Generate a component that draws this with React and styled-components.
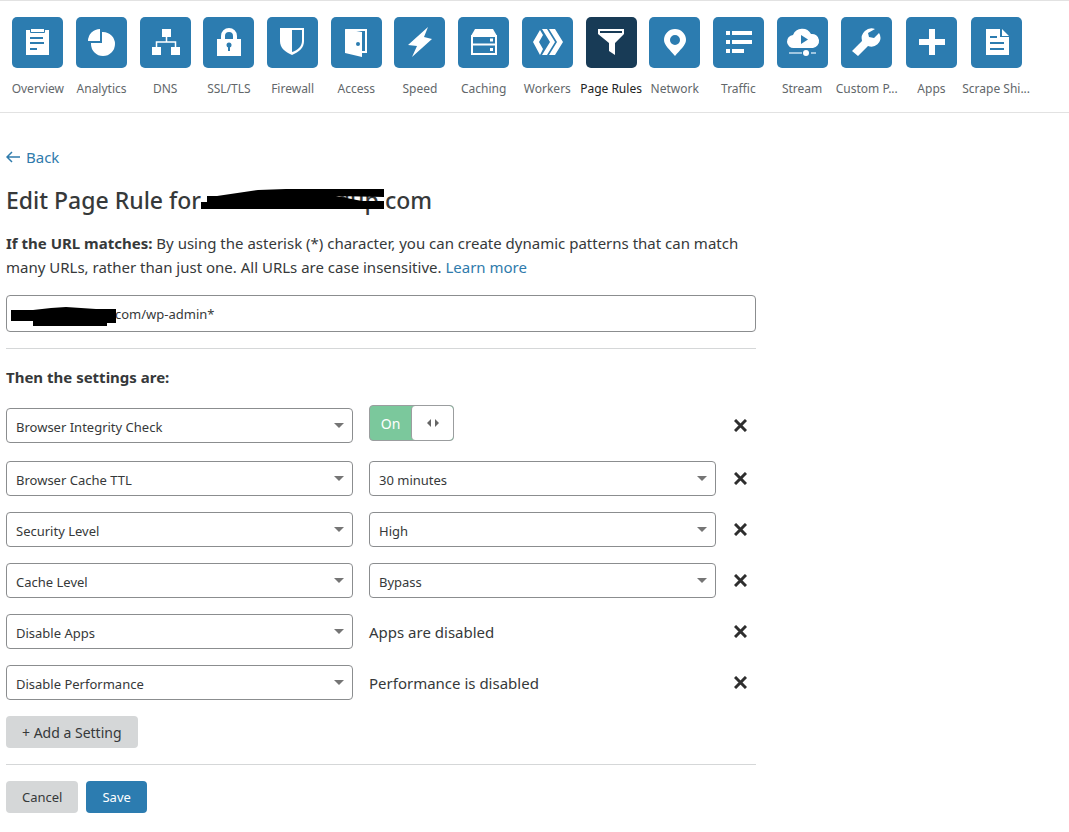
import React, { useState } from "react";
import styled, { createGlobalStyle } from "styled-components";

const blue = "#2c7cb0";
const navy = "#183b56";

const tabs = [
  {
    name: "Overview",
    icon: (
      <>
        <path fill="#fff" d="M14 13h4v-1h14v1h5v25H14z" />
        <path stroke={blue} strokeWidth="1" d="M18.500 12v3.500h14V12" />
        <path stroke={blue} strokeWidth="2" d="M18 21h13M18 26h14M18 32h7" />
      </>
    ),
  },
  {
    name: "Analytics",
    icon: (
      <>
        <path fill="#fff" d="M26 15h1a12 12 0 1 1-12 12v-1h11z" />
        <path fill="#fff" d="M24 12v12H12a12 12 0 0 1 12-12z" />
      </>
    ),
  },
  {
    name: "DNS",
    icon: (
      <>
        <path fill="#fff" d="M22 12h9v8h-9zM12 30h9v8h-9zM31 30h9v8h-9z" />
        <path stroke="#fff" strokeWidth="1.500" d="M26.500 20v5M16.500 30v-5h19v5" />
      </>
    ),
  },
  {
    name: "SSL/TLS",
    icon: (
      <>
        <path fill="#fff" d="M14 22h24v17H14z" />
        <path stroke="#fff" strokeWidth="4" d="M20 23v-4a6 6 0 0 1 12 0v4" />
        <circle cx="26" cy="28" r="2.500" fill={blue} />
        <path stroke={blue} strokeWidth="2" d="M26 28v6" />
      </>
    ),
  },
  {
    name: "Firewall",
    icon: (
      <>
        <path fill="#fff" d="M13 11h24v13c0 7-5 11-12 14-7-3-12-7-12-14z" />
        <path fill={blue} d="M25 13h10v11c0 5-4 9-10 11z" />
      </>
    ),
  },
  {
    name: "Access",
    icon: (
      <>
        <path stroke="#fff" strokeWidth="2" d="M15 13h20v22h-5" />
        <path fill="#fff" d="M14 12l17 3v25l-17-4z" />
        <circle cx="27" cy="27" r="2" fill={blue} />
      </>
    ),
  },
  {
    name: "Speed",
    icon: <path fill="#fff" d="M34 10L14 28l9 1-5 11 20-18-8-2z" />,
  },
  {
    name: "Caching",
    icon: (
      <>
        <path fill="#fff" d="M17 12h18l4 7H13z" />
        <path stroke="#fff" strokeWidth="2" d="M14 19h24v18H14zM14 27.500h24" />
        <path fill="#fff" d="M32 21.500h3v3h-3zM32 31h3v3h-3z" />
      </>
    ),
  },
  {
    name: "Workers",
    icon: (
      <path
        fill="#fff"
        d="M18 13l3 5-4 7 4 7-3 6-7-13zM20 12h5l8 13-8 13h-5l8-13zM27 12h6l8 13-8 13h-6l8-13z"
      />
    ),
  },
  {
    name: "Page Rules",
    active: true,
    icon: (
      <>
        <path fill="#fff" d="M12 12h26v5l-9 9v12l-6-4v-8l-11-9z" />
        <path stroke={navy} strokeWidth="2" d="M14 15h22" />
      </>
    ),
  },
  {
    name: "Network",
    icon: (
      <path
        fill="#fff"
        fillRule="evenodd"
        d="M26 12a11 11 0 0 1 11 11c0 5-6 10-11 16-5-6-11-11-11-16a11 11 0 0 1 11-11zm0 6a5 5 0 1 0 0 10 5 5 0 0 0 0-10z"
      />
    ),
  },
  {
    name: "Traffic",
    icon: (
      <path
        fill="#fff"
        d="M13 14h4v4h-4zM19 14h20v4H19zM13 23h4v4h-4zM19 23h20v4H19zM13 32h4v4h-4zM19 32h12v4H19z"
      />
    ),
  },
  {
    name: "Stream",
    icon: (
      <>
        <path
          fill="#fff"
          d="M17 31a6.500 6.500 0 0 1-1-13 10 10 0 0 1 18-1 7 7 0 0 1 2 14z"
        />
        <path fill={blue} d="M24 18l7 4.500-7 4.500z" />
        <path stroke="#9fc6e0" strokeWidth="2" d="M12 36h13M34 36h5" />
        <circle cx="29" cy="36" r="3" fill="#fff" />
      </>
    ),
  },
  {
    name: "Custom P...",
    wide: true,
    icon: (
      <path
        fill="#fff"
        d="M34 12a10 10 0 0 0-13 12L11 34l6 5 10-10a9 9 0 0 0 12-11l-1-2-5 5-5-1-1-4z"
      />
    ),
  },
  { name: "Apps", icon: <path fill="#fff" d="M23 12h6v10h10v6H29v10h-6V28H13v-6h10z" /> },
  {
    name: "Scrape Shi...",
    wide: true,
    icon: (
      <>
        <path fill="#fff" d="M15 12h14v8h9v18H15zM31 12l7 7h-7z" />
        <path stroke={blue} strokeWidth="2" d="M19 20h7M19 26h14M19 32h14" />
      </>
    ),
  },
];

const initialSettings = [
  { name: "Browser Integrity Check", type: "toggle" },
  { name: "Browser Cache TTL", type: "select", value: "30 minutes" },
  { name: "Security Level", type: "select", value: "High" },
  { name: "Cache Level", type: "select", value: "Bypass" },
  { name: "Disable Apps", type: "text", value: "Apps are disabled" },
  { name: "Disable Performance", type: "text", value: "Performance is disabled" },
];

function Dropdown({ label, value }) {
  return (
    <SelectWrap>
      <Select aria-label={label} defaultValue={value}>
        <option>{value}</option>
      </Select>
      <svg width="10" height="5" viewBox="0 0 10 5" aria-hidden="true">
        <path fill="#757575" d="M0 0h10L5 5z" />
      </svg>
    </SelectWrap>
  );
}

function Toggle() {
  const [on, setOn] = useState(true);
  return (
    <Switch type="button" aria-pressed={on} onClick={() => setOn(!on)}>
      <SwitchText>{on ? "On" : "Off"}</SwitchText>
      <Knob>
        <svg width="12" height="8" viewBox="0 0 12 8" aria-hidden="true">
          <path fill="#666" d="M4 0v8L0 4zM8 0v8l4-4z" />
        </svg>
      </Knob>
    </Switch>
  );
}

function App() {
  const [settings, setSettings] = useState(initialSettings);

  const removeSetting = (name) => {
    setSettings(settings.filter((s) => s.name !== name));
  };

  return (
    <>
      <GlobalStyle />
      <Nav>
        <TabList>
          {tabs.map((tab) => (
            <Tab key={tab.name} href="#" $wide={tab.wide} $active={tab.active}>
              <TabIcon $active={tab.active}>
                <svg width="51" height="51" viewBox="0 0 51 51" fill="none" aria-hidden="true">
                  {tab.icon}
                </svg>
              </TabIcon>
              {tab.name}
            </Tab>
          ))}
        </TabList>
      </Nav>
      <Main>
        <BackLink href="#">
          <svg width="14" height="12" viewBox="0 0 14 12" aria-hidden="true">
            <path fill="none" stroke="currentColor" strokeWidth="1.500" d="M14 6H2M6 1L1 6l5 5" />
          </svg>
          Back
        </BackLink>
        <Title>
          Edit Page Rule for
          <TitleDomain>
            ndup.com
            <TitleMark width="184" height="21" viewBox="0 0 184 21" aria-hidden="true">
              <path d="M0 13h6V7h10L57 1 85 0h98v8l-48-1 26 5h22v8H0z" />
            </TitleMark>
          </TitleDomain>
        </Title>
        <Intro>
          <label htmlFor="url">If the URL matches:</label> By using the asterisk (*) character, you can
          create dynamic patterns that can match many URLs, rather than just one. All URLs are case
          insensitive. <a href="#">Learn more</a>
        </Intro>
        <UrlField>
          <UrlInput id="url" defaultValue="com/wp-admin*" />
          <UrlMark width="105" height="19" viewBox="0 0 105 19" aria-hidden="true">
            <path d="M0 3h22L40 1 55 0l30 2h20v14h-9v3H22v-5H0z" />
          </UrlMark>
        </UrlField>
        <Divider />
        <SubTitle>Then the settings are:</SubTitle>
        <Settings>
          {settings.map((s) => (
            <SettingRow key={s.name} $toggle={s.type === "toggle"}>
              <Dropdown label="Setting" value={s.name} />
              {s.type === "toggle" && <Toggle />}
              {s.type === "select" && <Dropdown label={s.name} value={s.value} />}
              {s.type === "text" && <span>{s.value}</span>}
              <Remove type="button" aria-label={`Remove ${s.name}`} onClick={() => removeSetting(s.name)}>
                <svg width="13" height="13" viewBox="0 0 13 13" aria-hidden="true">
                  <path stroke="#2e2e2e" strokeWidth="3" d="M1 1l11 11M12 1L1 12" />
                </svg>
              </Remove>
            </SettingRow>
          ))}
        </Settings>
        <Button type="button" $large>
          + Add a Setting
        </Button>
        <Divider />
        <Actions>
          <Button type="button">Cancel</Button>
          <Button type="submit" $primary>
            Save
          </Button>
        </Actions>
      </Main>
    </>
  );
}

const GlobalStyle = createGlobalStyle`
  * {
    box-sizing: border-box;
  }
  body {
    margin: 0;
    background: #fff;
    color: #36393a;
    font-family: "Noto Sans", "Open Sans", sans-serif;
    font-size: 15px;
    line-height: 24px;
  }
  a {
    color: #2f7bac;
    text-decoration: none;
  }
  button, input, select {
    font-family: inherit;
    color: inherit;
  }
`;

const Nav = styled.nav`
  border-top: 1px solid #e2e2e2;
  border-bottom: 1px solid #e2e2e2;
  padding: 16px 6px 11px;
`;

const TabList = styled.div`
  display: flex;
  max-width: 1023px;
`;

const Tab = styled.a`
  flex: ${(props) => (props.$wide ? 66 : 64)} 1 0;
  min-width: 0;
  display: flex;
  flex-direction: column;
  align-items: center;
  gap: 9px;
  font-size: 12px;
  white-space: nowrap;
  && {
    color: ${(props) => (props.$active ? "#222" : "#62676a")};
  }
`;

const TabIcon = styled.span`
  width: 51px;
  height: 51px;
  border-radius: 5px;
  background: ${(props) => (props.$active ? navy : blue)};
  svg {
    display: block;
  }
`;

const Main = styled.main`
  max-width: 762px;
  padding: 32px 6px 19px;
`;

const BackLink = styled.a`
  display: flex;
  align-items: center;
  gap: 6px;
  width: fit-content;
`;

const Title = styled.h1`
  margin: 16px 0;
  font-size: 23px;
  font-weight: 500;
  line-height: 30px;
`;

const TitleDomain = styled.span`
  position: relative;
  display: inline-block;
  min-width: 231px;
  text-align: right;
`;

const TitleMark = styled.svg`
  position: absolute;
  left: 0;
  top: 4px;
`;

const Intro = styled.p`
  margin: 0 0 16px;
  label {
    font-weight: 700;
  }
`;

const UrlField = styled.div`
  position: relative;
`;

const UrlInput = styled.input`
  display: block;
  width: 100%;
  height: 37px;
  padding: 0 10px 0 108px;
  border: 1px solid #8b8d8f;
  border-radius: 4px;
  font-size: 13px;
`;

const UrlMark = styled.svg`
  position: absolute;
  left: 5px;
  top: 12px;
`;

const Divider = styled.hr`
  margin: 16px 0;
  border: 0;
  border-top: 1px solid #d5d7d8;
`;

const SubTitle = styled.h2`
  margin: 0 0 16px;
  font-size: 15px;
  line-height: 24px;
`;

const Settings = styled.div`
  display: flex;
  flex-direction: column;
`;

const SettingRow = styled.div`
  display: grid;
  grid-template-columns: 1fr 1fr 24px;
  column-gap: 16px;
  align-items: center;
  min-height: ${(props) => (props.$toggle ? 41 : 35)}px;
  margin-bottom: ${(props) => (props.$toggle ? 15 : 16)}px;
`;

const SelectWrap = styled.div`
  position: relative;
  svg {
    position: absolute;
    right: 9px;
    top: 15px;
    pointer-events: none;
  }
`;

const Select = styled.select`
  display: block;
  appearance: none;
  width: 100%;
  height: 35px;
  padding: 2px 24px 0 9px;
  border: 1px solid #8b8d8f;
  border-radius: 4px;
  background: #fff;
  font-size: 13px;
`;

const Switch = styled.button`
  display: flex;
  align-self: start;
  justify-self: start;
  width: 85px;
  height: 36px;
  padding: 0;
  border: 1px solid #9b9d9f;
  border-radius: 4px;
  background: #7bc89c;
  overflow: hidden;
`;

const SwitchText = styled.span`
  flex: 1;
  align-self: center;
  color: #fff;
  font-size: 14px;
`;

const Knob = styled.span`
  display: grid;
  place-items: center;
  width: 42px;
  height: 100%;
  border-left: 1px solid #9b9d9f;
  border-radius: 4px;
  background: #fff;
`;

const Remove = styled.button`
  display: grid;
  place-items: center;
  width: 16px;
  height: 32px;
  padding: 0;
  border: 0;
  background: none;
`;

const Button = styled.button`
  display: block;
  height: 32px;
  padding: 0 16px;
  border: 0;
  border-radius: 4px;
  background: ${(props) => (props.$primary ? blue : "#d5d7d8")};
  font-size: ${(props) => (props.$large ? 14 : 13)}px;
  && {
    color: ${(props) => (props.$primary ? "#fff" : "#36393a")};
  }
`;

const Actions = styled.div`
  display: flex;
  gap: 8px;
`;

export default App;
